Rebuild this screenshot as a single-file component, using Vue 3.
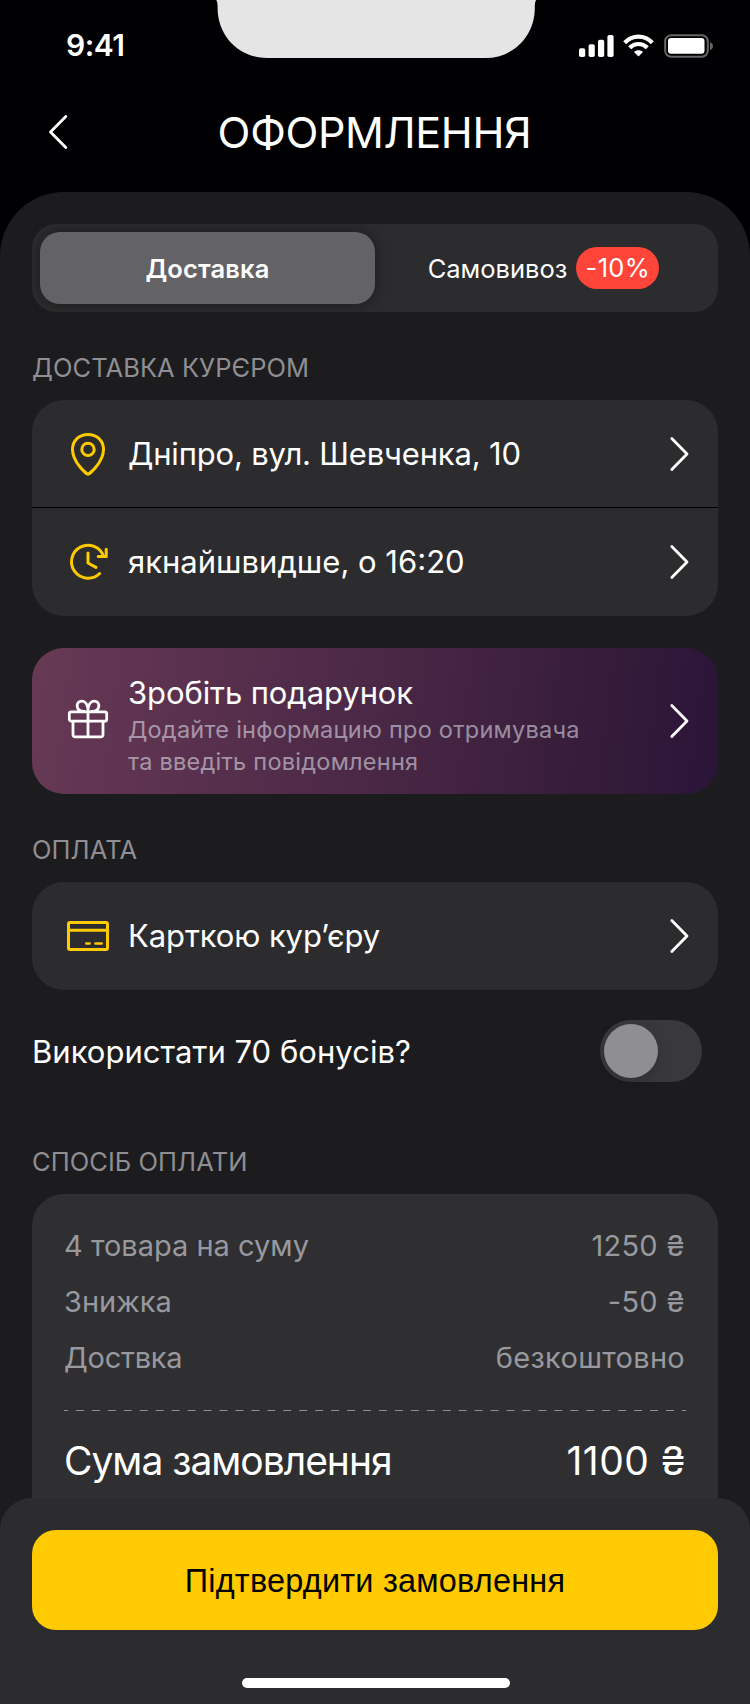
<script setup>
import { ref } from 'vue'

const method = ref('delivery')
const useBonuses = ref(false)

const summary = [
  { label: '4 товара на суму', value: '1250 ₴' },
  { label: 'Знижка', value: '-50 ₴' },
  { label: 'Доствка', value: 'безкоштовно' },
]
</script>

<template>
  <div class="screen">
    <div class="status">
      <span class="status__time">9:41</span>
      <svg class="status__notch" width="324" height="58" viewBox="0 0 324 58">
        <path d="M2.300 0C3.300 2 3.600 4 3.600 7V8C3.600 36 25 58 53 58H271.500C299.500 58 320.800 36 320.800 8V7C320.800 4 321.100 2 322.100 0Z" fill="#e5e5e5" />
      </svg>
      <svg class="status__icons" width="136" height="26" viewBox="0 0 136 26">
        <g fill="#fff">
          <rect x="1" y="15.300" width="6.200" height="8.700" rx="1.800" />
          <rect x="10.600" y="11.300" width="6.200" height="12.700" rx="1.800" />
          <rect x="20" y="6.700" width="6.200" height="17.300" rx="1.800" />
          <rect x="29.400" y="2" width="6.200" height="22" rx="1.800" />
          <path d="M60.500 23.600L56 19C58.500 16.700 62.500 16.700 65 19Z" />
        </g>
        <g fill="none" stroke="#fff" stroke-width="4.200">
          <path d="M46.700 9.700C54.500 1.500 66.500 1.500 74.300 9.700" />
          <path d="M51.700 14.800C56.800 9.700 64.200 9.700 69.300 14.800" />
        </g>
        <rect x="87.200" y="2.200" width="42.600" height="21.600" rx="6" fill="none" stroke="#fff" stroke-opacity=".4" stroke-width="2" />
        <rect x="90" y="5" width="36.500" height="15.800" rx="3" fill="#fff" />
        <path d="M132 9.300C134 10 135 11.500 135 13.200S134 16.400 132 17.100Z" fill="#fff" fill-opacity=".4" />
      </svg>
    </div>

    <header class="nav">
      <svg class="nav__back" width="20" height="36" viewBox="0 0 20 36">
        <path d="M17.800 2.600L2.500 18L17.800 33.400" />
      </svg>
      <h1 class="nav__title">ОФОРМЛЕННЯ</h1>
    </header>

    <main class="sheet">
      <div class="tabs">
        <button class="tabs__item" :class="{ 'tabs__item--active': method === 'delivery' }" @click="method = 'delivery'">
          <span class="tabs__delivery">Доставка</span>
        </button>
        <button class="tabs__item" :class="{ 'tabs__item--active': method === 'pickup' }" @click="method = 'pickup'">
          <span class="tabs__pickup">Самовивоз</span>
          <span class="tabs__badge">-10%</span>
        </button>
      </div>

      <h2 class="heading">ДОСТАВКА КУРЄРОМ</h2>
      <div class="card">
        <div class="row">
          <svg class="row__icon" width="48" height="48" viewBox="0 0 48 48">
            <path d="M24 44.300C23 44.300 8.500 32.500 8.500 19.500C8.500 10.500 15.200 4.500 24 4.500S39.500 10.500 39.500 19.500C39.500 32.500 25 44.300 24 44.300Z" />
            <circle cx="24" cy="19.400" r="6.200" />
          </svg>
          <span class="row__text row__text--address">Дніпро, вул. Шевченка, 10</span>
          <svg class="row__chevron" width="20" height="36" viewBox="0 0 20 36"><path d="M2.800 2.600L18 18L2.800 33.400" /></svg>
        </div>
        <div class="row">
          <svg class="row__icon" width="48" height="48" viewBox="0 0 48 48">
            <path d="M35.600 35.500A16.500 16.500 0 1 1 39.600 18.300" />
            <path d="M42.200 11.200V18.600H34.200" />
            <path d="M24 15V25L32 29.400" />
          </svg>
          <span class="row__text">якнайшвидше, о 16:20</span>
          <svg class="row__chevron" width="20" height="36" viewBox="0 0 20 36"><path d="M2.800 2.600L18 18L2.800 33.400" /></svg>
        </div>
      </div>

      <div class="card card--gift">
        <svg class="row__icon row__icon--gift" width="48" height="48" viewBox="0 0 48 48">
          <rect x="5.300" y="16.800" width="37.400" height="9.400" rx="2" />
          <path d="M9 26.500V39.500A2 2 0 0 0 11 41.800H37A2 2 0 0 0 39 39.500V26.500M24 16.500V41.500" />
          <path d="M24 16.500C24 11 22 6.200 17.800 6.200C14.500 6.200 13 8.600 13.200 11.200C13.400 14.500 16 16.500 20 16.500M24 16.500C24 11 26 6.200 30.200 6.200C33.500 6.200 35 8.600 34.800 11.200C34.600 14.500 32 16.500 28 16.500" />
        </svg>
        <div class="gift">
          <div class="gift__title">Зробіть подарунок</div>
          <div class="gift__text">Додайте інформацию про отримувача<br>та введіть повідомлення</div>
        </div>
        <svg class="row__chevron" width="20" height="36" viewBox="0 0 20 36"><path d="M2.800 2.600L18 18L2.800 33.400" /></svg>
      </div>

      <h2 class="heading">ОПЛАТА</h2>
      <div class="card">
        <div class="row">
          <svg class="row__icon" width="48" height="48" viewBox="0 0 48 48">
            <rect x="4.500" y="10.500" width="39" height="27" rx="1.500" />
            <path d="M4.500 18.200H43.500" />
            <path class="row__dash" d="M22.300 31.500H25.600M31.500 31.500H37.700" />
          </svg>
          <span class="row__text row__text--card">Карткою кур’єру</span>
          <svg class="row__chevron" width="20" height="36" viewBox="0 0 20 36"><path d="M2.800 2.600L18 18L2.800 33.400" /></svg>
        </div>
      </div>

      <div class="bonus">
        <span class="bonus__text">Використати 70 бонусів?</span>
        <button class="switch" :class="{ 'switch--on': useBonuses }" @click="useBonuses = !useBonuses">
          <span class="switch__knob"></span>
        </button>
      </div>

      <h2 class="heading">СПОСІБ ОПЛАТИ</h2>
      <div class="summary">
        <div v-for="item in summary" :key="item.label" class="summary__row">
          <span class="summary__label">{{ item.label }}</span>
          <span class="summary__value">{{ item.value }}</span>
        </div>
        <svg class="summary__line" width="622" height="1" viewBox="0 0 622 1">
          <path d="M0 .5H622" />
        </svg>
        <div class="summary__total">
          <span class="summary__total-label">Сума замовлення</span>
          <span class="summary__total-value">1100 ₴</span>
        </div>
      </div>
    </main>

    <footer class="footer">
      <button class="footer__button">Підтвердити замовлення</button>
      <div class="footer__home"></div>
    </footer>
  </div>
</template>

<style>
body {
  margin: 0;
  background: #000002;
}
</style>

<style scoped>
.screen {
  display: flex;
  flex-direction: column;
  width: 750px;
  height: 1704px;
  overflow: hidden;
  background: #000002;
  color: #fff;
  font-family: Inter, 'Liberation Sans', sans-serif;
  white-space: nowrap;
}

button {
  border: 0;
  padding: 0;
  background: none;
  color: inherit;
  font: inherit;
}

svg {
  flex: none;
}

.status {
  display: flex;
  flex: none;
  align-items: flex-start;
  height: 88px;
}

.status__time {
  width: 148px;
  padding: 29px 0 0 66px;
  font-size: 30px;
  line-height: 32px;
  font-weight: 600;
  letter-spacing: -0.5px;
}

.status__icons {
  margin: 33px 0 0 40px;
}

.nav {
  display: flex;
  flex: none;
  align-items: center;
  height: 88px;
  margin-bottom: 16px;
  padding: 0 48px;
}

.nav__back {
  fill: none;
  stroke: #fff;
  stroke-width: 2.8;
  stroke-linecap: round;
  stroke-linejoin: round;
}

.nav__title {
  flex: 1;
  margin: 0 21px 0 0;
  font-size: 43px;
  line-height: 48px;
  font-weight: 400;
  letter-spacing: -0.35px;
  text-align: center;
}

.sheet {
  flex: 1;
  min-height: 0;
  padding: 32px 32px 0;
  overflow: hidden;
  border-radius: 64px 64px 0 0;
  background: #1c1c1e;
}

.tabs {
  display: flex;
  box-sizing: border-box;
  height: 88px;
  padding: 8px;
  border-radius: 24px;
  background: #2c2c2e;
  font-size: 25.5px;
  letter-spacing: 0.1px;
}

.tabs__item {
  display: flex;
  flex: 1;
  align-items: center;
  justify-content: center;
  gap: 9px;
  border-radius: 20px;
}

.tabs__item--active {
  background: #636366;
  box-shadow: 0 0 16px rgba(0, 0, 0, 0.4);
  font-weight: 600;
  letter-spacing: 0.15px;
}

.tabs__pickup {
  padding-left: 2px;
}

.tabs__badge {
  box-sizing: border-box;
  width: 83px;
  height: 42px;
  border-radius: 21px;
  background: #ff453a;
  letter-spacing: 0.3px;
  line-height: 42px;
}

.heading {
  margin: 40px 0 16px;
  color: #8e8e93;
  font-size: 25.5px;
  line-height: 32px;
  font-weight: 400;
  letter-spacing: 0.05px;
}

.card {
  overflow: hidden;
  border-radius: 32px;
  background: #2c2c2e;
}

.row {
  display: flex;
  align-items: center;
  height: 108px;
  padding: 0 29px 0 32px;
}

.row:not(:last-child) {
  height: 107px;
  border-bottom: 1px solid #000;
}

.row__icon {
  margin-right: 16px;
  fill: none;
  stroke: #ffcb00;
  stroke-width: 3;
  stroke-linecap: round;
  stroke-linejoin: round;
}

.row__icon--gift {
  margin-bottom: 4px;
  stroke: #fff;
  stroke-width: 2.8;
}

.row__dash {
  stroke-width: 2.6;
}

.row__text {
  flex: 1;
  font-size: 31px;
  line-height: 40px;
}

.row__text--address {
  letter-spacing: -0.18px;
}

.row__text--card {
  letter-spacing: -0.1px;
}

.row__chevron {
  margin-left: auto;
  fill: none;
  stroke: #fff;
  stroke-width: 2.8;
  stroke-linecap: round;
  stroke-linejoin: round;
}

.card--gift {
  display: flex;
  align-items: center;
  height: 146px;
  margin-top: 32px;
  padding: 0 29px 0 32px;
  box-sizing: border-box;
  background: linear-gradient(97deg, #673955 0%, #4a2846 50%, #351c3a 82%, #2a1438 100%);
}

.gift {
  padding-top: 9px;
}

.gift__title {
  font-size: 31px;
  line-height: 40px;
  letter-spacing: -0.1px;
}

.gift__text {
  margin-top: 1px;
  color: rgba(235, 235, 245, 0.55);
  font-size: 23.5px;
  line-height: 32px;
  letter-spacing: 0.26px;
}

.bonus {
  display: flex;
  align-items: center;
  justify-content: space-between;
  box-sizing: border-box;
  height: 116px;
  padding: 30px 16px 24px 0;
}

.bonus__text {
  font-size: 31px;
  letter-spacing: 0.03px;
}

.switch {
  display: flex;
  box-sizing: border-box;
  width: 102px;
  height: 62px;
  padding: 4px;
  border-radius: 31px;
  background: #39393d;
}

.switch--on {
  justify-content: flex-end;
  background: #ffcb00;
}

.switch__knob {
  width: 54px;
  height: 54px;
  border-radius: 50%;
  background: #8e8e93;
  box-shadow: 0 6px 16px rgba(0, 0, 0, 0.15);
}

.summary {
  height: 340px;
  padding: 24px 32px 0;
  border-radius: 32px;
  background: #2f2f31;
}

.summary__row {
  display: flex;
  justify-content: space-between;
  color: #98989f;
  font-size: 29px;
  line-height: 56px;
}

.summary__row:nth-child(3) .summary__label {
  letter-spacing: -0.25px;
}

.summary__value {
  margin-right: 1px;
  letter-spacing: 0.28px;
}

.summary__line {
  display: block;
  margin: 24px 0;
  fill: none;
  stroke: #8e8e93;
  stroke-dasharray: 7.974;
  stroke-dashoffset: 3.987;
}

.summary__total {
  display: flex;
  justify-content: space-between;
  margin-top: 26px;
  font-size: 39px;
  line-height: 48px;
}

.summary__total-label {
  letter-spacing: -1.02px;
}

.summary__total-value {
  letter-spacing: 0.5px;
}

.footer {
  display: flex;
  flex: none;
  flex-direction: column;
  align-items: center;
  z-index: 1;
  box-sizing: border-box;
  height: 206px;
  margin-top: -32px;
  padding: 32px 32px 0;
  border-radius: 32px 32px 0 0;
  background: #2c2c2e;
}

.footer__button {
  width: 686px;
  height: 100px;
  padding-top: 2px;
  border-radius: 24px;
  background: #ffcb00;
  color: #000;
  font-family: 'Liberation Sans', Arial, sans-serif;
  font-size: 32.4px;
  letter-spacing: 0.25px;
}

.footer__home {
  width: 268px;
  height: 10px;
  margin: 48px 0 0 2px;
  border-radius: 5px;
  background: #fff;
}
</style>
